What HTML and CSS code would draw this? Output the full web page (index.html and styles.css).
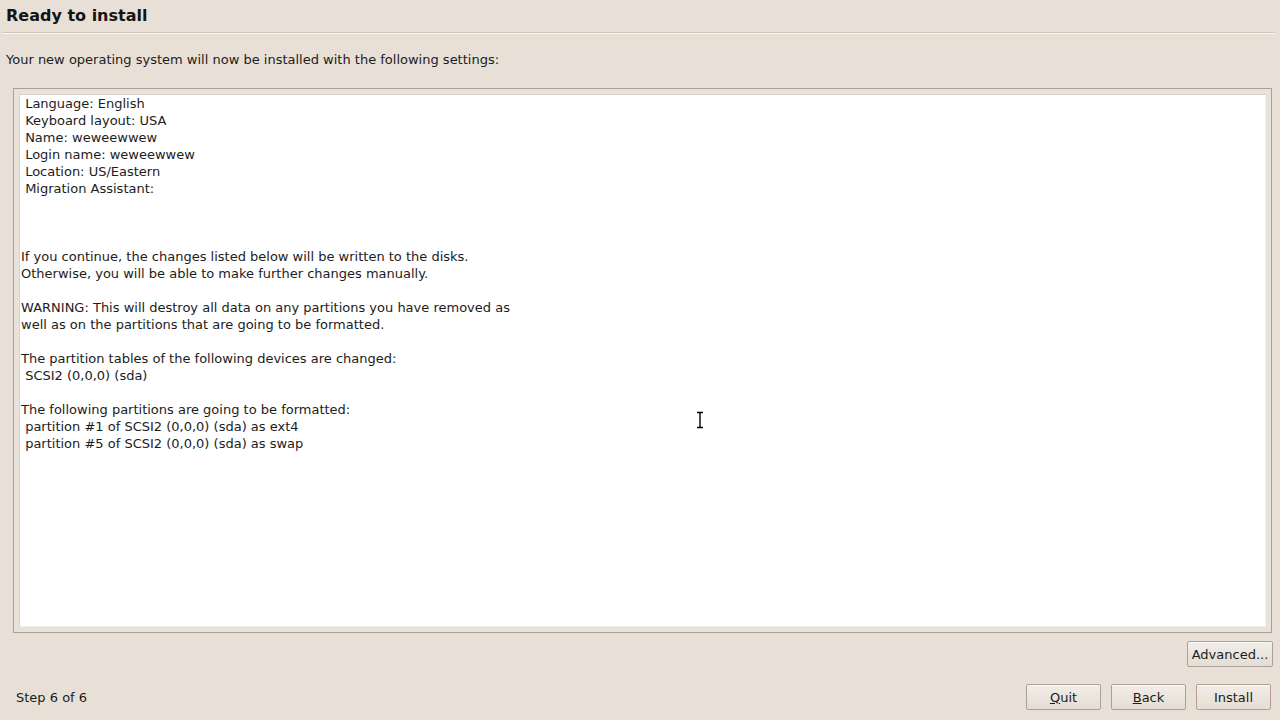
FILE: index.html
```html
<!DOCTYPE html>
<html>
<head>
    <title>Ready to install</title>
    <link rel="stylesheet" href="styles.css">
</head>
<body>
    <div id="installer">

        <h1 class="page_title">Ready to install</h1>
        <div class="separator"></div>

        <p class="intro">Your new operating system will now be installed with the following settings:</p>

        <div class="summary_frame">
            <div class="summary_view"><pre> Language: English
 Keyboard layout: USA
 Name: weweewwew
 Login name: weweewwew
 Location: US/Eastern
 Migration Assistant: 



If you continue, the changes listed below will be written to the disks.
Otherwise, you will be able to make further changes manually.

WARNING: This will destroy all data on any partitions you have removed as
well as on the partitions that are going to be formatted.

The partition tables of the following devices are changed:
 SCSI2 (0,0,0) (sda)

The following partitions are going to be formatted:
 partition #1 of SCSI2 (0,0,0) (sda) as ext4
 partition #5 of SCSI2 (0,0,0) (sda) as swap</pre></div>
        </div>

        <div class="advanced_row">
            <button class="btn btn_advanced">Advanced...</button>
        </div>

        <div class="bottom_row">
            <span class="step">Step 6 of 6</span>
            <div class="buttons">
                <button class="btn"><u>Q</u>uit</button>
                <button class="btn"><u>B</u>ack</button>
                <button class="btn btn_default">Install</button>
            </div>
        </div>

        <!-- mouse pointer over the text view -->
        <svg class="ibeam" width="10" height="18" viewBox="0 0 10 18">
            <path d="M2 1.5h6M5 1.5v15M2 16.5h6" stroke="#fff" stroke-width="3.2" fill="none"/>
            <path d="M2 1.5h6M5 1.5v15M2 16.5h6" stroke="#000" stroke-width="1.4" fill="none"/>
        </svg>
    </div>
</body>
</html>
```

FILE: styles.css
```css
html, body {
    margin:0;
    padding:0;
    background:#e8e0d6;
}

#installer {
    position:relative;
    width:1280px;
    height:720px;
    font-family:"DejaVu Sans", sans-serif;
    font-size:13px;
    color:#1c1c1c;
}

.page_title {
    margin:0;
    padding:6px 0 0 6px;
    font-size:16px;
    line-height:19px;
    font-weight:bold;
    color:#141414;
}

.separator {
    margin:7px 5px 0 2px;
    height:1px;
    border-bottom:1px solid #fbf9f6;
    background:#cdc5ba;
}

.intro {
    margin:18px 0 0 6px;
    line-height:16px;
}

.summary_frame {
    margin:20px 8px 0 13px;
    height:533px;
    padding:5px;
    border:1px solid #a9a197;
    background:#e9e2d9;
}

.summary_view {
    height:531px;
    border:1px solid #d9d2c8;
    border-right-color:#f3efea;
    border-bottom-color:#f3efea;
    background:#fff;
    overflow:hidden;
}

.summary_view pre {
    margin:0;
    padding:0 0 0 1px;
    font-family:"DejaVu Sans", sans-serif;
    font-size:13px;
    line-height:17px;
    color:#1c1c1c;
}

.advanced_row {
    display:flex;
    justify-content:flex-end;
    padding:8px 7px 0 0;
}

.bottom_row {
    display:flex;
    align-items:center;
    justify-content:space-between;
    padding:17px 9px 0 16px;
}

.buttons {
    display:flex;
    gap:10px;
}

.btn {
    width:75px;
    height:26px;
    padding:0;
    border:1px solid #aaa298;
    border-radius:2px;
    background:linear-gradient(#f1ede8, #e4ddd3);
    box-shadow:inset 0 1px 0 #fbf9f6;
    font-family:"DejaVu Sans", sans-serif;
    font-size:13px;
    color:#1c1c1c;
}

.btn_advanced {
    width:86px;
}

.btn_default {
    border-color:#b79c90;
}

.ibeam {
    position:absolute;
    left:695px;
    top:411px;
}
```
